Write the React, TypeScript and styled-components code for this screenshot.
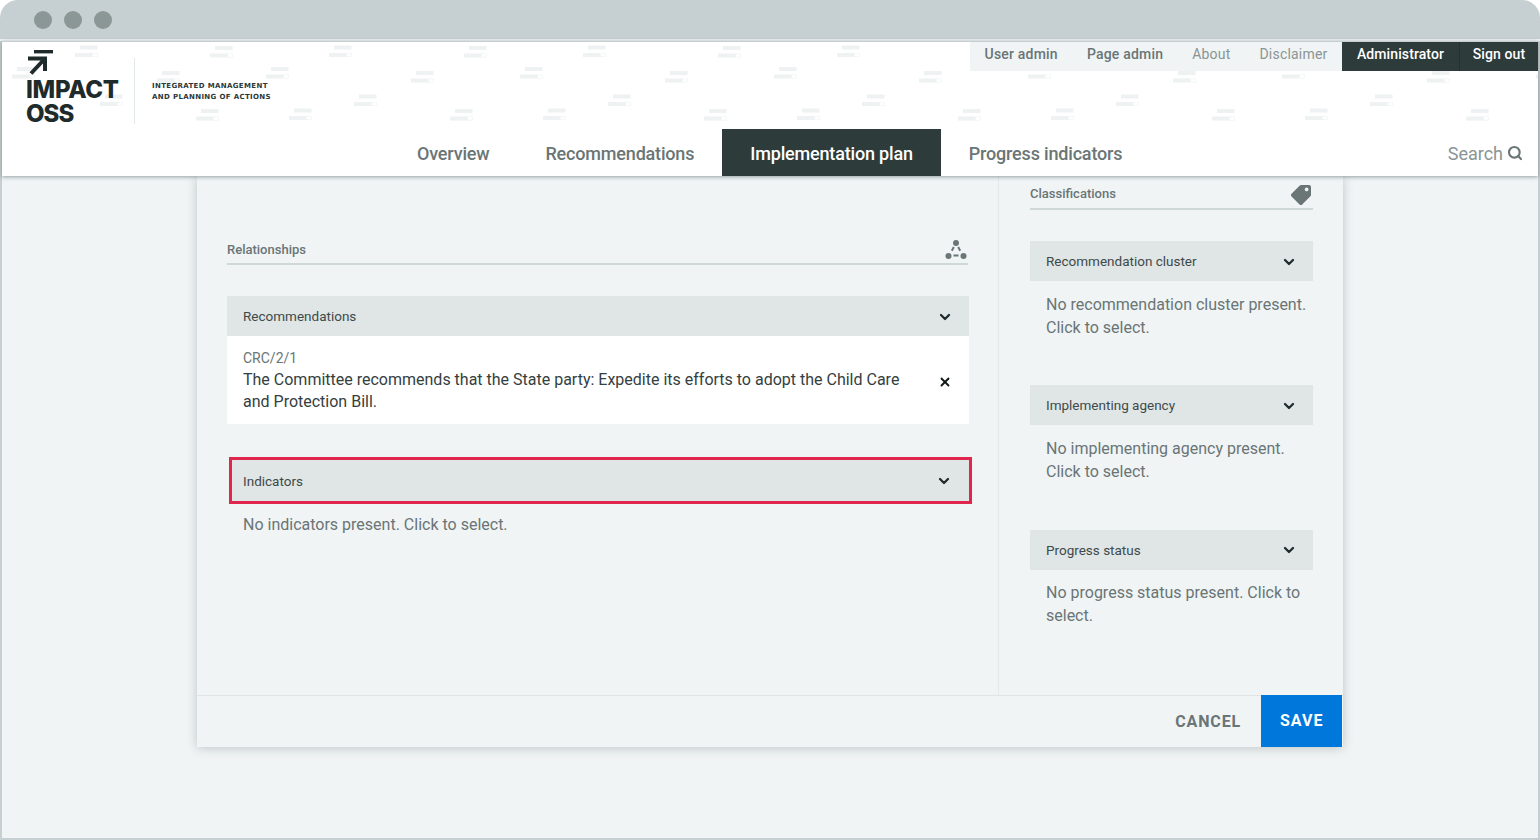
import React from "react";
import styled, { createGlobalStyle } from "styled-components";
import { ChevronDown, Search, X } from "lucide-react";
import { FaTag } from "react-icons/fa";

const Global = createGlobalStyle`
  html, body { margin: 0; padding: 0; background: #fff; }
  * { box-sizing: border-box; }
  body { font-family: Roboto, "Liberation Sans", sans-serif; }
`;

const Frame = styled.div`
  width: 1540px; height: 840px; display: flex; flex-direction: column;
  background: #c6cfd1; border-radius: 18px 18px 0 0; padding-bottom: 2px; overflow: hidden;
`;
const Chrome = styled.div`
  height: 41px; flex: none; display: flex; align-items: center; gap: 12px;
  padding: 1px 0 0 34px; border-bottom: 2px solid #eef2f2;
`;
const Dot = styled.span`
  width: 18px; height: 18px; border-radius: 50%; background: #8b9797;
`;
const Page = styled.div`
  flex: 1; margin: 0 2px; display: flex; flex-direction: column; background: #f0f4f5; min-height: 0;
`;
const Header = styled.header`
  position: relative; z-index: 2; height: 135px; flex: none; display: flex;
  background: #fff; border-top: 1px solid #c6cfd1; box-shadow: 0 1px 4px rgba(40, 55, 55, 0.45);
`;
const Pattern = styled.svg`
  position: absolute; inset: 0; width: 100%; height: 100%; pointer-events: none;
`;
const Brand = styled.div`
  position: relative; width: 387px; flex: none; display: flex; align-items: flex-start; padding: 7px 0 0 24px;
`;
const LogoBlock = styled.div`
  width: 108px; flex: none; display: flex; flex-direction: column; align-items: flex-start;
`;
const LogoMark = styled.svg`
  width: 26px; height: 26px; display: block; margin: 0 0 0 2px;
`;
const LogoWord = styled.div`
  font-family: Inter, "Liberation Sans", sans-serif; font-weight: 800; font-size: 24px; line-height: 24px;
  color: #1f2b2b; margin-top: 3px;
`;
const LogoLine = styled.div<{ $narrow?: boolean }>`
  letter-spacing: ${(p) => (p.$narrow ? -1 : -0.3)}px;
`;
const Divider = styled.div`
  width: 1px; height: 66px; background: #e3e8e8; margin-top: 9px; flex: none;
`;
const Tagline = styled.div`
  margin: 32px 0 0 17px; font-family: "DejaVu Sans", sans-serif; font-weight: 700; font-size: 7px;
  line-height: 11px; letter-spacing: 0.35px; color: #2c3838; white-space: nowrap;
`;
const NavColumn = styled.div`
  position: relative; flex: 1; display: flex; flex-direction: column; justify-content: space-between;
`;
const UtilityRow = styled.nav`
  display: flex; justify-content: flex-end; height: 29px;
`;
const UtilityLight = styled.div`
  display: flex; background: #f0f4f5; padding: 0;
`;
const UtilityLink = styled.a<{ $strong?: boolean }>`
  padding: 0 14.5px; font-size: 14px; line-height: 25px; letter-spacing: 0.2px;
  font-weight: ${(p) => (p.$strong ? 500 : 400)}; color: ${(p) => (p.$strong ? "#6a7575" : "#8a9494")};
`;
const UtilityDark = styled.a<{ $wide?: boolean }>`
  width: ${(p) => (p.$wide ? 117 : 79)}px; background: #2e3b3b; color: #fff; font-size: 14px; font-weight: 500;
  line-height: 25px; text-align: center; letter-spacing: 0.1px;
  border-left: ${(p) => (p.$wide ? "none" : "1px solid #253131")};
`;
const TabRow = styled.nav`
  display: flex; align-items: stretch; height: 47px;
`;
const Tab = styled.a<{ $active?: boolean }>`
  padding: 1px 28px 0; display: flex; align-items: center; font-size: 18px; font-weight: 500; letter-spacing: -0.18px;
  color: ${(p) => (p.$active ? "#fff" : "#6a7575")}; background: ${(p) => (p.$active ? "#2e3b3b" : "transparent")};
`;
const SearchBox = styled.div`
  margin-left: auto; padding: 1px 15px 0 0; display: flex; align-items: center; gap: 4px;
  font-size: 18px; color: #8a9494;
  svg { color: #6a7575; }
`;
const Main = styled.main`
  flex: 1; display: flex; justify-content: center; align-items: flex-start; min-height: 0;
`;
const Panel = styled.section`
  width: 1146px; height: 571px; display: flex; flex-direction: column; background: #f0f4f5;
  box-shadow: 0 1px 10px rgba(60, 80, 80, 0.28);
`;
const Body = styled.div`
  flex: 1; display: flex; min-height: 0;
`;
const LeftColumn = styled.div`
  width: 802px; flex: none; padding: 64px 29px 0 30px; border-right: 1px solid #e3e8e8;
`;
const RightColumn = styled.div`
  flex: 1; padding: 9px 30px 0 31px;
`;
const SectionTitle = styled.div<{ $nudge?: boolean }>`
  height: 25px; display: flex; justify-content: space-between; align-items: flex-start;
  border-bottom: 2px solid #ced8d7; font-size: 13px; line-height: 18px; font-weight: 500; color: #6a7575;
  position: relative; padding-top: ${(p) => (p.$nudge ? 1 : 0)}px; margin-right: ${(p) => (p.$nudge ? 1 : 0)}px;
`;
const TitleIcon = styled.span<{ $shift?: number }>`
  position: absolute; right: ${(p) => p.$shift ?? 0}px; bottom: 3px; display: flex; color: #6a7575;
`;
const BarHead = styled.div<{ $flagged?: boolean }>`
  height: ${(p) => (p.$flagged ? 47 : 40)}px; display: flex; align-items: center; justify-content: space-between;
  background: #e0e5e5; font-size: 13.5px; color: #3e4a4a;
  padding: ${(p) => (p.$flagged ? "0 17px 0 11px" : "0 16px")};
  margin: ${(p) => (p.$flagged ? "33px -3px 0 2px" : "0")};
  border: ${(p) => (p.$flagged ? "3px solid #e0264c" : "none")};
  svg { color: #1f2b2b; margin-top: 1px; }
`;
const Group = styled.div<{ $first?: boolean }>`
  margin-top: ${(p) => (p.$first ? 31 : 46.75)}px;
`;
const LeftGroup = styled.div`
  margin-top: 31px;
`;
const Empty = styled.p<{ $tight?: boolean }>`
  margin: 0; padding: ${(p) => (p.$tight ? 8.5 : 11.5)}px 0 0 16px; font-size: 16px; line-height: 23px; color: #6a7575;
`;
const Card = styled.div`
  height: 88px; display: flex; align-items: center; justify-content: space-between;
  background: #fff; padding: 0 17.5px 0 16px;
`;
const CardText = styled.div`
  width: 670px; color: #344040; font-size: 16px; line-height: 22px;
`;
const CardRef = styled.div`
  font-size: 14px; line-height: 21px; color: #6a7575;
`;
const CloseIcon = styled.span`
  display: flex; color: #111a1a; margin-top: 3px;
`;
const Footer = styled.footer`
  height: 52px; flex: none; display: flex; justify-content: flex-end; border-top: 1px solid #dfe5e5;
`;
const ActionButton = styled.button<{ $primary?: boolean }>`
  border: none; cursor: pointer; font-family: Roboto, sans-serif; font-size: 16px; font-weight: 700;
  letter-spacing: ${(p) => (p.$primary ? 1 : 0.85)}px; padding: 0 ${(p) => (p.$primary ? 19 : 20)}px 1px;
  color: ${(p) => (p.$primary ? "#fff" : "#6a7575")}; background: ${(p) => (p.$primary ? "#0077db" : "transparent")};
  width: ${(p) => (p.$primary ? "81px" : "auto")}; margin: ${(p) => (p.$primary ? "-1px 1px 0 0" : "0")};
`;

const dashes = [
  [78, 3.5], [213, 4], [15, 25], [160, 29], [103, 52.5], [38, 66.5], [199, 67],
];

const RelationIcon = () => (
  <svg width="24" height="22" viewBox="0 0 24 22" fill="#6a7575" stroke="#6a7575">
    <circle cx="12" cy="5" r="3" stroke="none" />
    <circle cx="4.5" cy="18" r="3" stroke="none" />
    <circle cx="19.5" cy="18" r="3" stroke="none" />
    <path d="M9.8 9 L7.8 12.8 M14.2 9 L16.2 12.8 M9.5 17.5 H14.5" strokeWidth="2" fill="none" />
  </svg>
);

const Chevron = () => <ChevronDown size={16} strokeWidth={3.4} />;

export default function App() {
  return (
    <Frame>
      <Global />
      <Chrome>
        <Dot />
        <Dot />
        <Dot />
      </Chrome>
      <Page>
        <Header>
          <Pattern aria-hidden="true">
            <defs>
              <pattern id="dashes" width="254" height="135" patternUnits="userSpaceOnUse">
                {dashes.map(([x, y]) => (
                  <g key={x}>
                    <rect x={x} y={y} width="17.5" height="4" fill="#eef2f2" />
                    <rect x={x - 5} y={y + 7.5} width="17.5" height="4" fill="#eef2f2" />
                    <rect x={x + 12.5} y={y + 7.8} width="5" height="3.4" fill="#fff" stroke="#f1f4f4" strokeWidth="0.7" />
                  </g>
                ))}
              </pattern>
            </defs>
            <rect width="100%" height="115" fill="url(#dashes)" />
          </Pattern>
          <Brand>
            <LogoBlock>
              <LogoMark viewBox="0 0 26 26">
                <rect x="6" y="1" width="19" height="3.4" fill="#1f2b2b" />
                <path d="M0 9.5 H17 V22 M17 9.5 L3 24.5" fill="none" stroke="#1f2b2b" strokeWidth="4" />
              </LogoMark>
              <LogoWord>
                <LogoLine>IMPACT</LogoLine>
                <LogoLine $narrow>OSS</LogoLine>
              </LogoWord>
            </LogoBlock>
            <Divider />
            <Tagline>
              INTEGRATED MANAGEMENT
              <br />
              AND PLANNING OF ACTIONS
            </Tagline>
          </Brand>
          <NavColumn>
            <UtilityRow>
              <UtilityLight>
                <UtilityLink $strong>User admin</UtilityLink>
                <UtilityLink $strong>Page admin</UtilityLink>
                <UtilityLink>About</UtilityLink>
                <UtilityLink>Disclaimer</UtilityLink>
              </UtilityLight>
              <UtilityDark $wide>Administrator</UtilityDark>
              <UtilityDark>Sign out</UtilityDark>
            </UtilityRow>
            <TabRow>
              <Tab>Overview</Tab>
              <Tab>Recommendations</Tab>
              <Tab $active>Implementation plan</Tab>
              <Tab>Progress indicators</Tab>
              <SearchBox>
                Search
                <Search size={16} strokeWidth={3.2} />
              </SearchBox>
            </TabRow>
          </NavColumn>
        </Header>
        <Main>
          <Panel>
            <Body>
              <LeftColumn>
                <SectionTitle $nudge>
                  Relationships
                  <TitleIcon>
                    <RelationIcon />
                  </TitleIcon>
                </SectionTitle>
                <LeftGroup>
                  <BarHead>
                    Recommendations
                    <Chevron />
                  </BarHead>
                  <Card>
                    <CardText>
                      <CardRef>CRC/2/1</CardRef>
                      The Committee recommends that the State party: Expedite its efforts to adopt the Child Care and
                      Protection Bill.
                    </CardText>
                    <CloseIcon>
                      <X size={14} strokeWidth={3.2} />
                    </CloseIcon>
                  </Card>
                </LeftGroup>
                <BarHead $flagged>
                  Indicators
                  <Chevron />
                </BarHead>
                <Empty $tight>No indicators present. Click to select.</Empty>
              </LeftColumn>
              <RightColumn>
                <SectionTitle>
                  Classifications
                  <TitleIcon $shift={2}>
                    <FaTag size={20} style={{ transform: "scaleX(-1)" }} />
                  </TitleIcon>
                </SectionTitle>
                <Group $first>
                  <BarHead>
                    Recommendation cluster
                    <Chevron />
                  </BarHead>
                  <Empty>No recommendation cluster present. Click to select.</Empty>
                </Group>
                <Group>
                  <BarHead>
                    Implementing agency
                    <Chevron />
                  </BarHead>
                  <Empty>No implementing agency present. Click to select.</Empty>
                </Group>
                <Group>
                  <BarHead>
                    Progress status
                    <Chevron />
                  </BarHead>
                  <Empty>No progress status present. Click to select.</Empty>
                </Group>
              </RightColumn>
            </Body>
            <Footer>
              <ActionButton>CANCEL</ActionButton>
              <ActionButton $primary>SAVE</ActionButton>
            </Footer>
          </Panel>
        </Main>
      </Page>
    </Frame>
  );
}
